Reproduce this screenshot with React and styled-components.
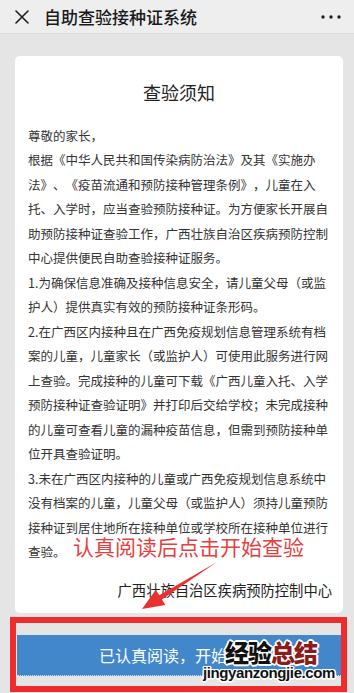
import React from "react";
import styled, { createGlobalStyle } from "styled-components";

const GlobalStyle = createGlobalStyle`
  html, body { margin: 0; padding: 0; }
  body {
    background: #e5e5e5;
    font-family: "Noto Sans CJK SC", "Noto Sans", sans-serif;
    color: #222;
    text-spacing-trim: space-all;
  }
  * { box-sizing: border-box; }
`;

const Page = styled.div`
  width: 354px;
  height: 693px;
  overflow: hidden;
  display: flex;
  flex-direction: column;
  background: #e5e5e5;
`;

const Header = styled.header`
  height: 34px;
  flex: none;
  display: flex;
  align-items: center;
  padding: 0 13px 0 15px;
  background: #eeeeee;
  border-bottom: 1px solid #dddddd;
`;

const Title = styled.h1`
  margin: 0 0 0 15px;
  flex: 1;
  font-size: 17px;
  line-height: 20px;
  font-weight: 500;
  color: #1a1a1a;
`;

const Main = styled.main`
  flex: none;
  padding: 22px 11px 0 15px;
`;

const Card = styled.section`
  position: relative;
  height: 557px;
  background: #ffffff;
  border-radius: 5px;
  padding: 24px 13px 0 13px;
`;

const CardTitle = styled.h2`
  margin: 0 0 19.5px;
  text-align: center;
  font-size: 18px;
  line-height: 24px;
  font-weight: 400;
  color: #222;
`;

const Body = styled.div`
  width: 302px;
  font-size: 12.5px;
  line-height: 24.5px;
  color: #333;
  text-spacing-trim: space-all;
`;

const Para = styled.p`
  margin: 0;
`;

const Signature = styled.p`
  margin: 13px -2px 0 0;
  text-align: right;
  font-size: 14.3px;
  line-height: 24px;
  color: #222;
`;

const Annotation = styled.div`
  position: absolute;
  left: 58px;
  top: 478px;
  font-size: 21px;
  line-height: 24px;
  color: #e5403f;
  white-space: nowrap;
`;

const ArrowSvg = styled.svg`
  position: absolute;
  left: 120px;
  top: 498px;
  overflow: visible;
`;

const Footer = styled.footer`
  position: relative;
  flex: 1;
  padding: 22px 13px 0 17px;
`;

const StartButton = styled.button`
  display: block;
  width: 100%;
  height: 41px;
  border: none;
  border-bottom: 1px dotted #c9dcef;
  background: #4287ca;
  color: #ffffff;
  font-family: "Noto Sans CJK SC", "Noto Sans", sans-serif;
  font-size: 16px;
  padding: 0;
  text-align: center;
  text-spacing-trim: space-all;
`;

const RedFrame = styled.div`
  position: absolute;
  left: 10px;
  top: 4px;
  width: 337px;
  height: 75px;
  border: 6px solid #ee2c2c;
  pointer-events: none;
`;

const Watermark = styled.div`
  position: absolute;
  left: 225px;
  top: 25px;
  font-size: 24px;
  line-height: 28px;
  font-weight: 900;
  white-space: nowrap;
  letter-spacing: -1px;
  text-shadow: 1px 1px 0 #fff, -1px -1px 0 #fff, 1px -1px 0 #fff, -1px 1px 0 #fff,
    2px 0 0 #fff, -2px 0 0 #fff, 0 2px 0 #fff, 0 -2px 0 #fff;
`;

const Mark = styled.span`
  color: ${(p) => p.$tone};
`;

const WatermarkUrl = styled.div`
  position: absolute;
  left: 203px;
  top: 51px;
  font-family: "Liberation Sans", Arial, sans-serif;
  font-size: 15px;
  line-height: 18px;
  font-weight: 700;
  color: #111;
  letter-spacing: -0.4px;
  white-space: nowrap;
  text-shadow: 1px 1px 0 #fff, -1px -1px 0 #fff, 1px -1px 0 #fff, -1px 1px 0 #fff,
    1.5px 0 0 #fff, -1.5px 0 0 #fff, 0 1.5px 0 #fff, 0 -1.5px 0 #fff;
`;

const CloseIcon = () => (
  <svg width="14" height="14" viewBox="0 0 14 14">
    <path d="M1 1 L13 13 M13 1 L1 13" stroke="#1f1f1f" strokeWidth="1.6" strokeLinecap="round" fill="none" />
  </svg>
);

const MoreIcon = () => (
  <svg width="20" height="6" viewBox="0 0 20 6">
    <circle cx="2" cy="3" r="1.7" fill="#1f1f1f" />
    <circle cx="10" cy="3" r="1.7" fill="#1f1f1f" />
    <circle cx="18" cy="3" r="1.7" fill="#1f1f1f" />
  </svg>
);

export default function App() {
  return (
    <>
      <GlobalStyle />
      <Page>
        <Header>
          <CloseIcon />
          <Title>自助查验接种证系统</Title>
          <MoreIcon />
        </Header>
        <Main>
          <Card>
            <CardTitle>查验须知</CardTitle>
            <Body>
              <Para>尊敬的家长，</Para>
              <Para>
                根据《中华人民共和国传染病防治法》及其《实施办法》、《疫苗流通和预防接种管理条例》，儿童在入托、入学时，应当查验预防接种证。为方便家长开展自助预防接种证查验工作，广西壮族自治区疾病预防控制中心提供便民自助查验接种证服务。
              </Para>
              <Para>1.为确保信息准确及接种信息安全，请儿童父母（或监护人）提供真实有效的预防接种证条形码。</Para>
              <Para>
                2.在广西区内接种且在广西免疫规划信息管理系统有档案的儿童，儿童家长（或监护人）可使用此服务进行网上查验。完成接种的儿童可下载《广西儿童入托、入学预防接种证查验证明》并打印后交给学校；未完成接种的儿童可查看儿童的漏种疫苗信息，但需到预防接种单位开具查验证明。
              </Para>
              <Para>
                3.未在广西区内接种的儿童或广西免疫规划信息系统中没有档案的儿童，儿童父母（或监护人）须持儿童预防接种证到居住地所在接种单位或学校所在接种单位进行查验。
              </Para>
            </Body>
            <Signature>广西壮族自治区疾病预防控制中心</Signature>
            <Annotation>认真阅读后点击开始查验</Annotation>
            <ArrowSvg width="90" height="60" viewBox="0 0 90 60">
              <polygon
                points="82,8 24.3,41.2 20.8,35.7 7,55 30.4,50.9 26.9,45.4"
                fill="#e8322f"
              />
            </ArrowSvg>
          </Card>
        </Main>
        <Footer>
          <StartButton>已认真阅读，开始查验</StartButton>
          <RedFrame />
          <Watermark>
            <Mark $tone="#111">经验</Mark>
            <Mark $tone="#8c1c1c">总结</Mark>
          </Watermark>
          <WatermarkUrl>jingyanzongjie.com</WatermarkUrl>
        </Footer>
      </Page>
    </>
  );
}
